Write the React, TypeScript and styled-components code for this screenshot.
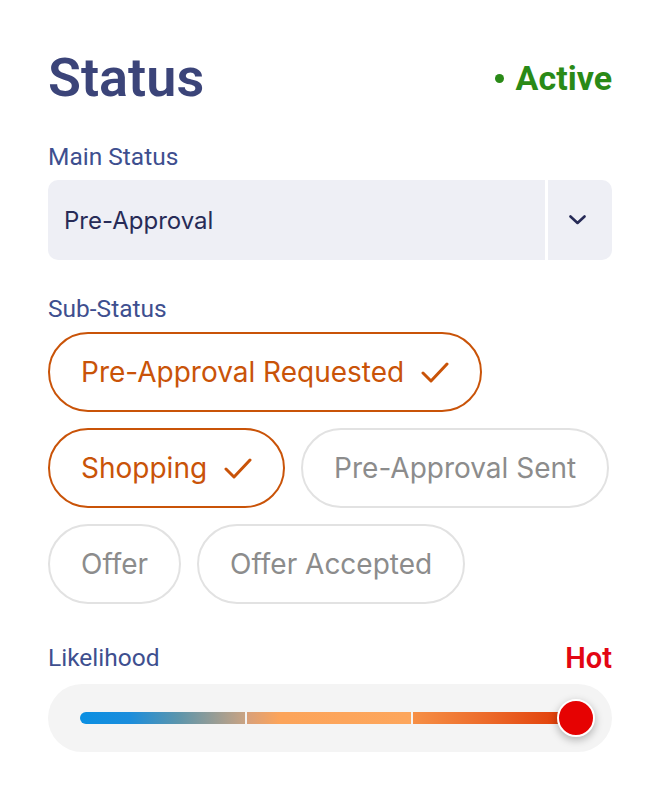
import React from "react";
import styled, { createGlobalStyle } from "styled-components";

const Global = createGlobalStyle`
  html, body { margin: 0; padding: 0; background: #ffffff; }
  * { box-sizing: border-box; }
`;

const Panel = styled.div`
  width: 660px;
  padding: 48px 48px 40px;
  display: flex;
  flex-direction: column;
  font-family: Roboto, "Noto Sans", sans-serif;
`;

const Header = styled.div`
  height: 60px;
  display: flex;
  align-items: center;
  justify-content: space-between;
`;

const Title = styled.h1`
  margin: 0;
  font-size: 54px;
  line-height: 60px;
  font-weight: 600;
  color: #3b4479;
`;

const Badge = styled.div`
  display: flex;
  align-items: center;
  gap: 12px;
  font-size: 34px;
  font-weight: 700;
  color: #2a8a17;
`;

const Dot = styled.span`
  width: 9px;
  height: 9px;
  border-radius: 50%;
  background: #2a8a17;
`;

const Label = styled.div<{ $top: number }>`
  margin-top: ${(p) => p.$top}px;
  margin-bottom: 9px;
  font-size: 24.5px;
  line-height: 28px;
  color: #3e4f8f;
`;

const Select = styled.div`
  height: 80px;
  display: flex;
  border-radius: 10px;
  overflow: hidden;
  background: #eeeff5;
`;

const SelectValue = styled.div`
  flex: 1;
  display: flex;
  align-items: center;
  padding-left: 16px;
  font-family: Inter, sans-serif;
  font-size: 24px;
  color: #272b57;
  border-right: 3px solid #ffffff;
`;

const SelectButton = styled.div`
  width: 64px;
  display: flex;
  align-items: center;
  justify-content: center;
  padding-right: 6px;
`;

const Chips = styled.div`
  display: flex;
  flex-wrap: wrap;
  gap: 16px;
`;

const Chip = styled.div<{ $on?: boolean }>`
  height: 80px;
  display: flex;
  align-items: center;
  gap: 17px;
  padding: 0 31px;
  border-radius: 40px;
  border: 2px solid ${(p) => (p.$on ? "#c95308" : "#e2e2e2")};
  color: ${(p) => (p.$on ? "#c95308" : "#8c8c8c")};
  font-family: Inter, sans-serif;
  font-size: 28px;
  white-space: nowrap;
`;

const LabelRow = styled.div`
  margin-top: 40px;
  margin-bottom: 12px;
  display: flex;
  justify-content: space-between;
  align-items: flex-end;
`;

const RowLabel = styled.div`
  font-size: 24.5px;
  line-height: 28px;
  color: #3e4f8f;
`;

const Hot = styled.div`
  font-size: 29px;
  line-height: 28px;
  font-weight: 600;
  color: #e30613;
`;

const Track = styled.div`
  height: 68px;
  border-radius: 34px;
  background: #f4f4f4;
  display: flex;
  align-items: center;
  padding: 0 34px 0 32px;
`;

const Bar = styled.div`
  position: relative;
  flex: 1;
  height: 12px;
  display: flex;
  gap: 2px;
`;

const Segment = styled.div<{ $bg: string; $first?: boolean; $last?: boolean }>`
  flex: 1;
  background: ${(p) => p.$bg};
  border-radius: ${(p) => (p.$first ? "6px 0 0 6px" : p.$last ? "0 6px 6px 0" : "0")};
`;

const Thumb = styled.div`
  position: absolute;
  right: -17px;
  top: 50%;
  width: 38px;
  height: 38px;
  margin-top: -19px;
  border-radius: 50%;
  background: #e60202;
  border: 2px solid #ffffff;
  box-shadow: 0 3px 8px rgba(0, 0, 0, 0.28);
`;

const Check = () => (
  <svg width="28" height="21" viewBox="0 0 28 21" fill="none">
    <path d="M2 11 L10 19 L26 2" stroke="currentColor" strokeWidth="3" strokeLinecap="round" strokeLinejoin="round" />
  </svg>
);

const Chevron = () => (
  <svg width="17" height="10" viewBox="0 0 17 10" fill="none">
    <path d="M1.5 1.5 L8.5 8 L15.5 1.5" stroke="#272b57" strokeWidth="2.6" strokeLinecap="round" strokeLinejoin="round" />
  </svg>
);

const chips = [
  { label: "Pre-Approval Requested", on: true },
  { label: "Shopping", on: true },
  { label: "Pre-Approval Sent", on: false },
  { label: "Offer", on: false },
  { label: "Offer Accepted", on: false },
];

export default function App() {
  return (
    <>
      <Global />
      <Panel>
        <Header>
          <Title>Status</Title>
          <Badge>
            <Dot />
            Active
          </Badge>
        </Header>
        <Label $top={35}>Main Status</Label>
        <Select>
          <SelectValue>Pre-Approval</SelectValue>
          <SelectButton>
            <Chevron />
          </SelectButton>
        </Select>
        <Label $top={35}>Sub-Status</Label>
        <Chips>
          {chips.map((c) => (
            <Chip key={c.label} $on={c.on}>
              {c.label}
              {c.on && <Check />}
            </Chip>
          ))}
        </Chips>
        <LabelRow>
          <RowLabel>Likelihood</RowLabel>
          <Hot>Hot</Hot>
        </LabelRow>
        <Track>
          <Bar>
            <Segment $first $bg="linear-gradient(90deg, #0a8fe2 0%, #1b8ddc 30%, #5d95ab 60%, #c9a383 100%)" />
            <Segment $bg="linear-gradient(90deg, #d8a07a 0%, #fca45a 20%, #fda65c 100%)" />
            <Segment $last $bg="linear-gradient(90deg, #f68f45 0%, #ec6a2a 45%, #df3502 100%)" />
            <Thumb />
          </Bar>
        </Track>
      </Panel>
    </>
  );
}
